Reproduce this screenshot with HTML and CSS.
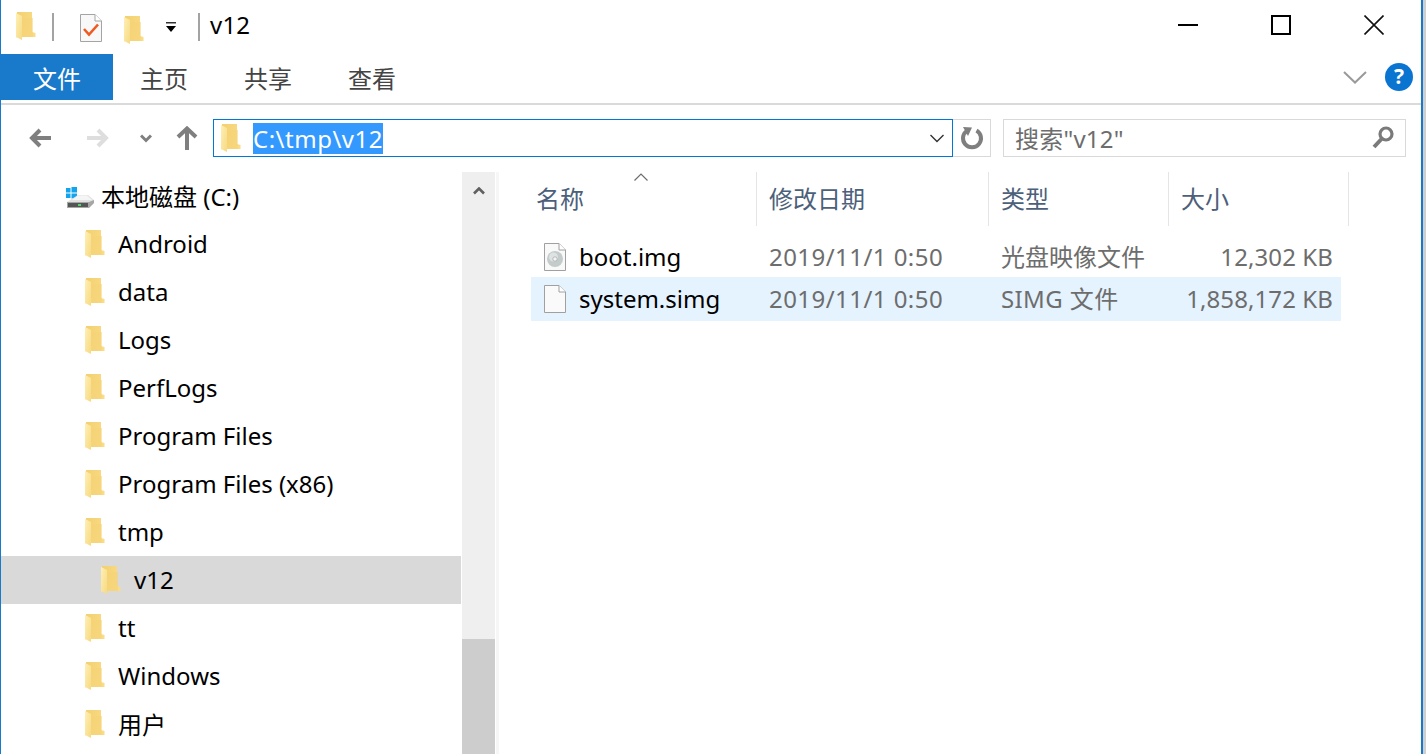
FILE: index.html
```html
<!DOCTYPE html>
<html lang="zh">
<head>
<meta charset="utf-8">
<title>v12</title>
<link rel="stylesheet" href="styles.css">
</head>
<body>
<svg class="defs" width="0" height="0" aria-hidden="true">
  <defs>
    <linearGradient id="fb" x1="0" y1="0" x2="1" y2="0.4"><stop offset="0" stop-color="#f3d070"/><stop offset="1" stop-color="#f9dc85"/></linearGradient>
    <linearGradient id="ff" x1="0" y1="0" x2="1" y2="1"><stop offset="0" stop-color="#fff0b4"/><stop offset="1" stop-color="#f6d983"/></linearGradient>
    <symbol id="folder" viewBox="0 0 20 28">
      <path d="M1 0H16V20L19.500 21V25H6V20H1Z" fill="url(#fb)"/>
      <path d="M0 1L6 4V28L1 25.500H0Z" fill="url(#ff)"/>
      <path d="M6 6L17 6V25H6Z" fill="#f5d274" opacity=".55"/>
    </symbol>
  </defs>
</svg>
<div class="window">
  <header class="titlebar">
    <svg class="folder ti-a"><use href="#folder"/></svg>
    <span class="tsep ts-a"></span>
    <svg class="ti-note" viewBox="0 0 22 28" width="22" height="28">
      <path d="M.5.500H15L21.500 7V27.500H.5Z" fill="#f8f8f8" stroke="#a4a4a4"/>
      <path d="M15 .5V7H21.500" fill="#fff" stroke="#a4a4a4"/>
      <path d="M4 15L9 20.500L18 10.500" fill="none" stroke="#ef5a22" stroke-width="2.600"/>
    </svg>
    <svg class="folder ti-b"><use href="#folder"/></svg>
    <svg class="ti-drop" viewBox="0 0 12 12" width="12" height="12">
      <path d="M1 1H11V2.500H1Z" fill="#333"/><path d="M1 5H11L6 11Z" fill="#000"/>
    </svg>
    <span class="tsep ts-b"></span>
    <span class="ttext">v12</span>
    <div class="winctl">
      <svg viewBox="0 0 20 20" width="20" height="20"><path d="M0 10H20" stroke="#000" stroke-width="2"/></svg>
      <svg viewBox="0 0 20 20" width="20" height="20"><path d="M1 1H19V19H1Z" fill="none" stroke="#000" stroke-width="2"/></svg>
      <svg viewBox="0 0 20 20" width="20" height="20"><path d="M.5.500L19.500 19.500M19.500.5L.5 19.500" stroke="#111" stroke-width="1.600"/></svg>
    </div>
  </header>

  <nav class="ribbon">
    <span class="tab tab-file">文件</span>
    <span class="tab tab-first">主页</span>
    <span class="tab">共享</span>
    <span class="tab">查看</span>
    <div class="ribbon-right">
      <svg viewBox="0 0 24 13" width="24" height="13"><path d="M1 1L12 11.500L23 1" fill="none" stroke="#9a9a9a" stroke-width="2"/></svg>
      <span class="help">?</span>
    </div>
  </nav>

  <div class="addrbar">
    <svg class="nav-back" viewBox="0 0 22 20" width="22" height="20"><path d="M11 2L3 10L11 18M3 10H22" fill="none" stroke="#7f7f7f" stroke-width="4"/></svg>
    <svg class="nav-fwd" viewBox="0 0 22 20" width="22" height="20"><path d="M11 2L19 10L11 18M19 10H0" fill="none" stroke="#dedede" stroke-width="4"/></svg>
    <svg class="nav-down" viewBox="0 0 12 9" width="12" height="9"><path d="M1 1.500L6 6.500L11 1.500" fill="none" stroke="#7f7f7f" stroke-width="3"/></svg>
    <svg class="nav-up" viewBox="0 0 22 24" width="22" height="24"><path d="M2 11L11 2.500L20 11M11 3V24" fill="none" stroke="#7f7f7f" stroke-width="4"/></svg>
    <div class="addr">
      <svg class="folder addr-folder"><use href="#folder"/></svg>
      <span class="addr-text">C:\tmp\v12</span>
      <svg class="addr-chev" viewBox="0 0 14 9" width="14" height="9"><path d="M.5 1L7 7.500L13.500 1" fill="none" stroke="#333" stroke-width="1.400"/></svg>
    </div>
    <div class="refresh">
      <svg viewBox="0 0 24 24" width="24" height="24"><path d="M16.500 4.500A9 9 0 1 1 7 4.800" fill="none" stroke="#7f7f7f" stroke-width="4"/><path d="M3 1L12 1.500L8 10Z" fill="#7f7f7f"/></svg>
    </div>
    <div class="search">
      <span class="search-text">搜索"v12"</span>
      <svg viewBox="0 0 22 24" width="22" height="24"><circle cx="14" cy="8" r="6" fill="none" stroke="#7a7a7a" stroke-width="3.200"/><path d="M9.500 13L2 21" stroke="#7a7a7a" stroke-width="4"/></svg>
    </div>
  </div>

  <main class="panes">
    <section class="tree">
      <div class="node node-disk">
        <svg class="disk" viewBox="0 0 28 22" width="28" height="22">
          <path d="M0 1H4.500V5.500H0ZM5.500 0H11V5.500H5.500ZM0 6.500H4.500V11H0ZM5.500 6.500H11V11.500H5.500Z" fill="#12a5ee"/>
          <path d="M1 15L12 8H22L28 13V16L22 21H5L1 19Z" fill="#e2e2e2"/>
          <path d="M1 15H23L28 13V16L23 21H1Z" fill="#a6a6a6"/>
          <path d="M12 8.500H21L26 13H6Z" fill="#f5f5f5"/>
          <path d="M2 16H22V20H2Z" fill="#555"/>
          <path d="M12 17H15V19H12Z" fill="#5bd36a"/>
        </svg>
        <span>本地磁盘 (C:)</span>
      </div>
      <div class="node"><svg class="folder"><use href="#folder"/></svg><span>Android</span></div>
      <div class="node"><svg class="folder"><use href="#folder"/></svg><span>data</span></div>
      <div class="node"><svg class="folder"><use href="#folder"/></svg><span>Logs</span></div>
      <div class="node"><svg class="folder"><use href="#folder"/></svg><span>PerfLogs</span></div>
      <div class="node"><svg class="folder"><use href="#folder"/></svg><span>Program Files</span></div>
      <div class="node"><svg class="folder"><use href="#folder"/></svg><span>Program Files (x86)</span></div>
      <div class="node"><svg class="folder"><use href="#folder"/></svg><span>tmp</span></div>
      <div class="node node-sel"><svg class="folder"><use href="#folder"/></svg><span>v12</span></div>
      <div class="node"><svg class="folder"><use href="#folder"/></svg><span>tt</span></div>
      <div class="node"><svg class="folder"><use href="#folder"/></svg><span>Windows</span></div>
      <div class="node"><svg class="folder"><use href="#folder"/></svg><span>用户</span></div>
    </section>
    <aside class="vscroll">
      <div class="vtrack">
        <svg class="vup" viewBox="0 0 12 8" width="12" height="8"><path d="M1 6.500L6 1.500L11 6.500" fill="none" stroke="#606060" stroke-width="2.600"/></svg>
      </div>
      <div class="vthumb"></div>
    </aside>
    <div class="splitter"></div>
    <section class="files">
      <div class="fhead">
        <svg class="sort" viewBox="0 0 14 8" width="14" height="8"><path d="M.5 7.500L7 1L13.500 7.500" fill="none" stroke="#6d6d6d" stroke-width="1.200"/></svg>
        <div class="col c-name">名称</div>
        <div class="col c-date">修改日期</div>
        <div class="col c-type">类型</div>
        <div class="col c-size">大小</div>
      </div>
      <div class="frow">
        <div class="f-name">
          <svg class="doc" viewBox="0 0 22 28" width="22" height="28">
            <path d="M.5.500H15L21.500 7V27.500H.5Z" fill="#f9f9f9" stroke="#a0a0a0"/>
            <path d="M15 .5V7H21.500" fill="#fff" stroke="#a0a0a0"/>
            <circle cx="11" cy="16" r="8" fill="#c4cbcb"/><circle cx="9.500" cy="14" r="4.500" fill="#dde2e2"/><circle cx="11" cy="16" r="2.200" fill="#f4f4f4" stroke="#999" stroke-width=".6"/>
          </svg>
          <span>boot.img</span>
        </div>
        <div class="f-date">2019/11/1 0:50</div>
        <div class="f-type">光盘映像文件</div>
        <div class="f-size">12,302 KB</div>
      </div>
      <div class="frow frow-sel">
        <div class="f-name">
          <svg class="doc" viewBox="0 0 22 28" width="22" height="28">
            <path d="M.5.500H15L21.500 7V27.500H.5Z" fill="#fafafa" stroke="#a0a0a0"/>
            <path d="M15 .5V7H21.500" fill="#fff" stroke="#a0a0a0"/>
          </svg>
          <span>system.simg</span>
        </div>
        <div class="f-date">2019/11/1 0:50</div>
        <div class="f-type f-type-latin">SIMG 文件</div>
        <div class="f-size">1,858,172 KB</div>
      </div>
    </section>
  </main>
</div>
</body>
</html>
```
FILE: styles.css
```css
* { box-sizing: border-box; }
html, body { margin: 0; height: 100%; overflow: hidden; }
body {
  background: #d0d0d0;
  font-family: "Noto Sans", "Noto Sans CJK SC", sans-serif;
  font-size: 24px;
  color: #000;
}
.defs { position: absolute; }
.window {
  width: 1423px;
  height: 754px;
  background: #fff;
  border-left: 1px solid #1979ca;
  border-right: 2px solid #1979ca;
  display: flex;
  flex-direction: column;
  overflow: hidden;
}
.folder { width: 20px; height: 28px; flex: none; display: block; }

/* title bar */
.titlebar { height: 53px; flex: none; display: flex; align-items: center; }
.ti-a { margin-left: 15px; margin-top: -1px; }
.tsep { width: 2px; height: 28px; background: #a3a3a3; flex: none; margin-top: 0; }
.ts-a { margin-left: 16px; }
.ti-note { margin-left: 26px; margin-top: 2px; flex: none; }
.ti-b { margin-left: 22px; margin-top: 6px; }
.ti-drop { margin-left: 21px; margin-top: 1px; flex: none; }
.ts-b { margin-left: 21px; }
.ttext { margin-left: 10px; line-height: 32px; color: #000; margin-top: -3px; letter-spacing: .2px; }
.winctl { margin-left: auto; display: flex; gap: 73px; margin-right: 37px; margin-top: -3px; }

/* ribbon */
.ribbon {
  height: 52px;
  flex: none;
  display: flex;
  align-items: flex-start;
  border-bottom: 2px solid #dadada;
  padding-top: 1px;
}
.tab { height: 46px; line-height: 49px; padding: 0 28px; color: #444; }
.tab-file { background: #1979ca; color: #fff; padding: 0 32px; }
.tab-first { margin-left: -1px; }
.ribbon-right { margin-left: auto; display: flex; align-items: center; gap: 18px; margin-right: 8px; height: 46px; }
.help {
  width: 28px; height: 28px; border-radius: 50%;
  background: #0a74d1; color: #fff; font-size: 21px; font-weight: 700;
  text-align: center; line-height: 27px;
}

/* address bar */
.addrbar { height: 67px; flex: none; display: flex; align-items: center; padding-bottom: 1px; }
.addrbar > svg { flex: none; display: block; }
.nav-back { margin-left: 28px; }
.nav-fwd { margin-left: 36px; }
.nav-down { margin-left: 31px; margin-top: 1px; }
.nav-up { margin-left: 24px; }
.addr {
  margin-left: 15px; width: 740px; height: 38px; flex: none;
  border: 1px solid #0078d7; display: flex; align-items: center; padding-left: 7px;
}
.addr-text {
  margin-left: 12px; background: #3399ff; color: #fff; line-height: 31px; height: 31px; letter-spacing: .5px;
}
.addr-chev { margin-left: auto; margin-right: 8px; }
.refresh {
  width: 38px; height: 38px; flex: none; border: 1px solid #d9d9d9; border-left: 0;
  display: flex; align-items: center; justify-content: center;
}
.search {
  margin-left: 12px; width: 403px; height: 38px; flex: none; border: 1px solid #d9d9d9;
  display: flex; align-items: center; justify-content: space-between; padding: 0 11px; color: #6d6d6d;
}
.search-text { letter-spacing: .2px; margin-top: -2px; }

/* panes */
.panes { flex: 1; min-height: 0; display: flex; overflow: hidden; }
.tree { width: 460px; flex: none; display: flex; flex-direction: column; }
.node { height: 48px; flex: none; display: flex; align-items: center; padding-left: 84px; gap: 13px; }
.node span { margin-top: -2px; }
.node-disk { padding-left: 65px; gap: 7px; }
.disk { flex: none; margin-top: 3px; }
.node-sel { background: #d9d9d9; padding-left: 100px; }
.vscroll { width: 33px; flex: none; margin-left: 1px; display: flex; flex-direction: column; background: #efefef; }
.vtrack { height: 467px; flex: none; display: flex; justify-content: center; padding-top: 15px; }
.vup { display: block; }
.vthumb { flex: 1; background: #cdcdcd; }
.splitter { width: 3px; flex: none; margin-left: 1px; background: #f6f6f6; }

.files { flex: 1; min-width: 0; position: relative; }
.fhead { display: grid; grid-template-columns: 258px 232px 180px 180px; height: 51px; margin-bottom: 12px; color: #4c607a; }
.col { padding-left: 12px; border-right: 1px solid #e5e5e5; line-height: 54px; }
.c-name { padding-left: 37px; }
.sort { position: absolute; left: 135px; top: 1px; }
.frow {
  display: grid; grid-template-columns: 238px 232px 179px 1fr;
  width: 810px; height: 43px; margin-left: 32px; align-items: center; color: #6d6d6d;
}
.frow + .frow { margin-top: -1px; height: 44px; padding-bottom: 1px; }
.frow-sel { background: #e5f3ff; }
.f-name { display: flex; align-items: center; gap: 13px; padding-left: 13px; color: #000; }
.doc { flex: none; }
.f-date { letter-spacing: .45px; }
.f-type { margin-top: -2px; }
.f-type-latin { letter-spacing: .4px; }
.f-size { text-align: right; padding-right: 8px; white-space: nowrap; letter-spacing: .1px; }
```
